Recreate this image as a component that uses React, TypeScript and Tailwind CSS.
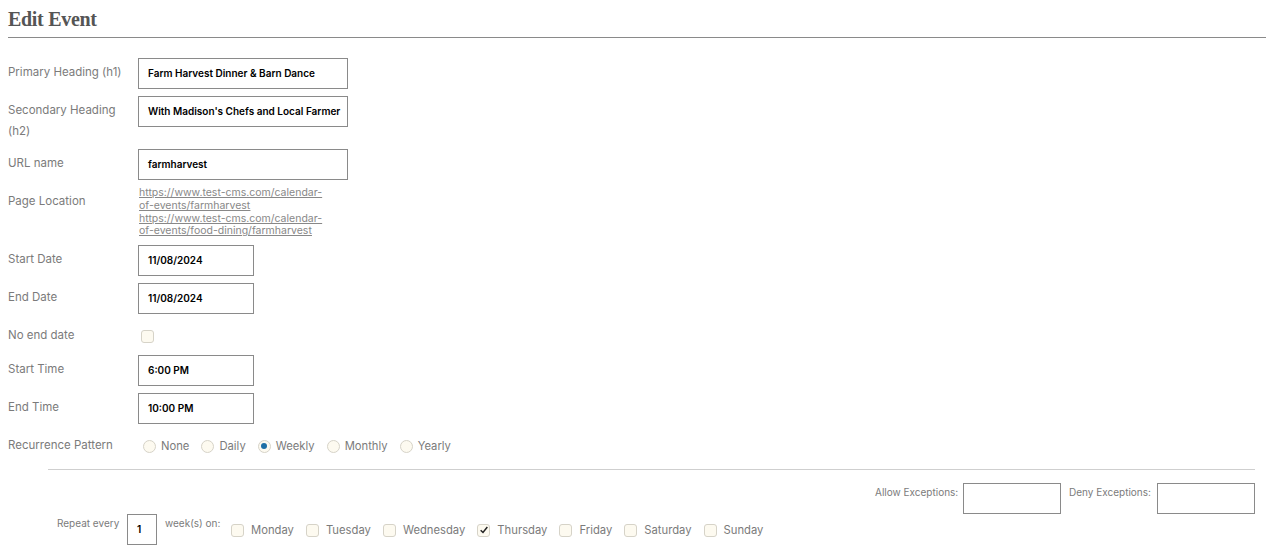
import React from "react";

const font = { fontFamily: "Inter, 'Noto Sans', sans-serif" };

function Label({ children }: { children: React.ReactNode }) {
  return (
    <div className="w-[130px] shrink-0 pt-1 text-[11.5px] leading-[21px] text-[#7b7b7b]">
      {children}
    </div>
  );
}

function TextBox({ value, w }: { value: string; w: string }) {
  return (
    <div
      className={`${w} h-[31px] border border-[#8a8a8a] bg-white px-[9px] flex items-center text-[10px] font-semibold text-black whitespace-nowrap overflow-hidden`}
    >
      {value}
    </div>
  );
}

function Check({ checked = false }: { checked?: boolean }) {
  return (
    <span className="flex h-[13px] w-[13px] shrink-0 items-center justify-center rounded-[3px] border border-[#d6d3c8] bg-[#fdfaf0]">
      {checked && (
        <svg viewBox="0 0 12 12" className="h-[10px] w-[10px]">
          <path d="M2 6.2 L4.8 9 L10 2.5" fill="none" stroke="#222" strokeWidth="1.8" />
        </svg>
      )}
    </span>
  );
}

function Radio({ checked = false }: { checked?: boolean }) {
  return (
    <span className="flex h-[13px] w-[13px] shrink-0 items-center justify-center rounded-full border border-[#d6d3c8] bg-[#fdfaf0]">
      {checked && <span className="h-[6px] w-[6px] rounded-full bg-[#1f6fa6]" />}
    </span>
  );
}

export default function App() {
  const radios = [
    ["None", false],
    ["Daily", false],
    ["Weekly", true],
    ["Monthly", false],
    ["Yearly", false],
  ] as const;
  const days = [
    ["Monday", false],
    ["Tuesday", false],
    ["Wednesday", false],
    ["Thursday", true],
    ["Friday", false],
    ["Saturday", false],
    ["Sunday", false],
  ] as const;
  return (
    <div className="min-h-[553px] bg-white pl-2 pr-[1px]" style={font}>
      <h1
        className="pt-[7px] pb-[6px] text-[20px] leading-[24px] font-bold text-[#555] tracking-[-0.3px]"
        style={{ fontFamily: "'Liberation Serif', 'DejaVu Serif', serif" }}
      >
        Edit Event
      </h1>
      <div className="h-px bg-[#8a8a8a]" />

      <div className="mt-5 flex flex-col gap-[7px]">
        <div className="flex">
          <Label>Primary Heading (h1)</Label>
          <TextBox w="w-[210px]" value="Farm Harvest Dinner & Barn Dance" />
        </div>
        <div className="flex">
          <Label>
            Secondary Heading
            <br />
            (h2)
          </Label>
          <TextBox w="w-[210px]" value="With Madison's Chefs and Local Farmer" />
        </div>
        <div className="flex">
          <Label>URL name</Label>
          <TextBox w="w-[210px]" value="farmharvest" />
        </div>
        <div className="flex">
          <Label>Page Location</Label>
          <div className="w-[200px] pl-px text-[10.5px] leading-[12.75px] text-[#888] underline">
            <a className="block">https://www.test-cms.com/calendar-<br />of-events/farmharvest</a>
            <a className="block">https://www.test-cms.com/calendar-<br />of-events/food-dining/farmharvest</a>
          </div>
        </div>
        <div className="flex">
          <Label>Start Date</Label>
          <TextBox w="w-[116px]" value="11/08/2024" />
        </div>
        <div className="flex">
          <Label>End Date</Label>
          <TextBox w="w-[116px]" value="11/08/2024" />
        </div>
        <div className="flex h-[27px]">
          <Label>No end date</Label>
          <div className="flex items-start pt-[9px] pl-[3px]">
            <Check />
          </div>
        </div>
        <div className="flex">
          <Label>Start Time</Label>
          <TextBox w="w-[116px]" value="6:00 PM" />
        </div>
        <div className="flex">
          <Label>End Time</Label>
          <TextBox w="w-[116px]" value="10:00 PM" />
        </div>
        <div className="flex">
          <Label>Recurrence Pattern</Label>
          <div className="flex items-center gap-[12px] pt-[8px] pl-[5px] self-start text-[11.25px] leading-[14px] text-[#7b7b7b]">
            {radios.map(([name, c]) => (
              <span key={name} className="flex items-center gap-[5px]">
                <Radio checked={c} />
                <span>{name}</span>
              </span>
            ))}
          </div>
        </div>
      </div>

      <div className="ml-10 mr-[11px] mt-[13px] border-t border-[#cfcfcf]">
        <div className="mt-[13px] flex justify-end text-[10px] text-[#7b7b7b]">
          <div className="flex items-start">
            <span className="mr-2 w-[80px] pt-[3px] leading-[12px] whitespace-nowrap">Allow Exceptions:</span>
            <div className="h-[31px] w-[98px] border border-[#8a8a8a]" />
            <span className="ml-[8px] mr-2 w-[80px] pt-[3px] leading-[12px] whitespace-nowrap">Deny Exceptions:</span>
            <div className="h-[31px] w-[98px] border border-[#8a8a8a]" />
          </div>
        </div>
        <div className="ml-[9px] flex items-start text-[10px] text-[#7b7b7b]">
          <span className="w-[70px] pt-[3px] leading-[12px]">Repeat every</span>
          <div className="flex h-[31px] w-[30px] items-center border border-[#8a8a8a] pl-[9px] text-[10px] font-semibold text-black">
            1
          </div>
          <span className="ml-[8px] w-[66px] pt-[3px] leading-[12px]">week(s) on:</span>
          <div className="flex items-center pt-[9px] text-[11.25px] leading-[14px]">
            {days.map(([d, c]) => (
              <span key={d} className="mr-[12px] flex items-center gap-[7px]">
                <Check checked={c} />
                <span>{d}</span>
              </span>
            ))}
          </div>
        </div>
      </div>
    </div>
  );
}
